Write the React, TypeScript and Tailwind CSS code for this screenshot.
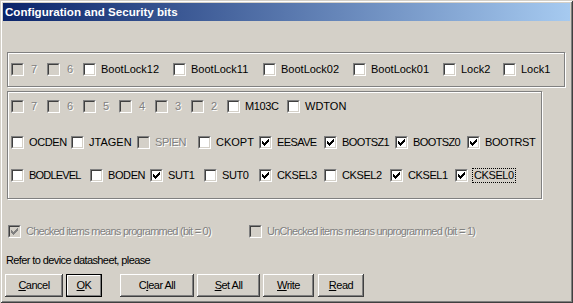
import React from "react";

const CHECK = [
  "......X",
  ".....XX",
  "X...XXX",
  "XX.XXX.",
  "XXXXX..",
  ".XXX...",
  "..X....",
];

function CheckMark({ color }: { color: string }) {
  const rects: React.ReactNode[] = [];
  CHECK.forEach((row, y) =>
    row.split("").forEach((c, x) => {
      if (c === "X") rects.push(<rect key={`${x}-${y}`} x={x} y={y} width={1} height={1} />);
    })
  );
  return (
    <svg width="7" height="7" viewBox="0 0 7 7" fill={color} shapeRendering="crispEdges">
      {rects}
    </svg>
  );
}

function Box({ checked, disabled }: { checked?: boolean; disabled?: boolean }) {
  return (
    <div className="w-[13px] h-[13px] shrink-0 border border-t-[#808080] border-l-[#808080] border-b-white border-r-white">
      <div
        className={
          "w-full h-full border border-t-[#404040] border-l-[#404040] border-b-[#d4d0c8] border-r-[#d4d0c8] flex items-center justify-center " +
          (disabled ? "bg-[#d4d0c8]" : "bg-white")
        }
      >
        {checked && <CheckMark color={disabled ? "#808080" : "#000000"} />}
      </div>
    </div>
  );
}

type ItemProps = {
  w?: string;
  label: string;
  checked?: boolean;
  disabled?: boolean;
  digit?: boolean;
  track?: string;
  focus?: boolean;
};

function Item({ w = "", label, checked, disabled, digit, track = "", focus }: ItemProps) {
  const color = disabled ? "text-[#808080] [text-shadow:1px_1px_0_#ffffff]" : "text-black";
  return (
    <div className={"flex items-center h-[13px] shrink-0 " + w}>
      <Box checked={checked} disabled={disabled} />
      {focus ? (
        <span className={"ml-[4px] h-[15px] leading-[13px] px-[1px] border border-dotted border-black whitespace-nowrap " + color + " " + track}>
          {label}
        </span>
      ) : (
        <span className={(digit ? "ml-[7px] " : "ml-[5px] ") + "leading-[13px] whitespace-nowrap " + color + " " + track}>
          {label}
        </span>
      )}
    </div>
  );
}

function Btn({ w, def, children }: { w: string; def?: boolean; children: React.ReactNode }) {
  const cls = def
    ? "border border-black shadow-[inset_-1px_-1px_0_#808080,inset_1px_1px_0_#ffffff]"
    : "shadow-[inset_-1px_-1px_0_#404040,inset_1px_1px_0_#ffffff,inset_-2px_-2px_0_#808080,inset_2px_2px_0_#d4d0c8]";
  return (
    <div className={"h-[23px] flex items-center justify-center shrink-0 tracking-[-0.5px] " + w + " " + cls}>
      <span className="whitespace-nowrap">{children}</span>
    </div>
  );
}

const CAPS = "tracking-[-0.4px]";

export default function App() {
  return (
    <div className="w-[573px] h-[303px] bg-[#d4d0c8] p-[3px] flex flex-col font-['Liberation_Sans',Arial,sans-serif] text-[11px] text-black shadow-[inset_1px_1px_0_#d4d0c8,inset_-1px_-1px_0_#404040,inset_2px_2px_0_#ffffff,inset_-2px_-2px_0_#808080]">
      <div className="h-[18px] shrink-0 bg-[linear-gradient(to_right,#0a246a,#a6caf0)] flex items-center pl-[2px] text-white font-bold text-[11.6px] whitespace-nowrap">
        Configuration and Security bits
      </div>

      <div className="ml-[4px] mt-[31px] w-[558px] h-[35px] shrink-0 border border-[#808080] shadow-[inset_1px_1px_0_#ffffff,1px_1px_0_#ffffff] pl-[3px] pt-[10px] flex">
        <Item w="w-[36px]" label="7" disabled digit />
        <Item w="w-[36px]" label="6" disabled digit />
        <Item w="w-[90px]" label="BootLock12" />
        <Item w="w-[90px]" label="BootLock11" />
        <Item w="w-[90px]" label="BootLock02" />
        <Item w="w-[90px]" label="BootLock01" />
        <Item w="w-[60px]" label="Lock2" />
        <Item label="Lock1" />
      </div>

      <div className="ml-[4px] mt-[4px] w-[535px] h-[108px] shrink-0 border border-[#808080] shadow-[inset_1px_1px_0_#ffffff,1px_1px_0_#ffffff] pl-[3px] pt-[8px] flex flex-col">
        <div className="flex">
          <Item w="w-[36px]" label="7" disabled digit />
          <Item w="w-[36px]" label="6" disabled digit />
          <Item w="w-[36px]" label="5" disabled digit />
          <Item w="w-[36px]" label="4" disabled digit />
          <Item w="w-[36px]" label="3" disabled digit />
          <Item w="w-[36px]" label="2" disabled digit />
          <Item w="w-[60px]" label="M103C" track={CAPS} />
          <Item label="WDTON" />
        </div>
        <div className="flex mt-[23px]">
          <Item w="w-[60px]" label="OCDEN" track={CAPS} />
          <Item w="w-[66px]" label="JTAGEN" />
          <Item w="w-[61px]" label="SPIEN" disabled track={CAPS} />
          <Item w="w-[61px]" label="CKOPT" />
          <Item w="w-[65px]" label="EESAVE" checked track="tracking-[-0.6px]" />
          <Item w="w-[71px]" label="BOOTSZ1" checked track="tracking-[-0.6px]" />
          <Item w="w-[72px]" label="BOOTSZ0" checked track="tracking-[-0.6px]" />
          <Item label="BOOTRST" checked track={CAPS} />
        </div>
        <div className="flex mt-[20px]">
          <Item w="w-[79px]" label="BODLEVEL" track="tracking-[-0.8px]" />
          <Item w="w-[60px]" label="BODEN" track={CAPS} />
          <Item w="w-[54px]" label="SUT1" checked track={CAPS} />
          <Item w="w-[55px]" label="SUT0" track={CAPS} />
          <Item w="w-[65px]" label="CKSEL3" checked track={CAPS} />
          <Item w="w-[66px]" label="CKSEL2" track={CAPS} />
          <Item w="w-[65px]" label="CKSEL1" checked track={CAPS} />
          <Item label="CKSEL0" checked focus track={CAPS} />
        </div>
      </div>

      <div className="mt-[26px] ml-[5px] flex h-[13px] shrink-0">
        <Item w="w-[241px]" label="Checked items means programmed (bit = 0)" checked disabled track="tracking-[-0.75px]" />
        <Item label="UnChecked items means unprogrammed (bit = 1)" disabled track="tracking-[-0.75px]" />
      </div>

      <div className="mt-[16px] ml-[3px] h-[13px] leading-[13px] shrink-0 whitespace-nowrap tracking-[-0.6px]">
        Refer to device datasheet, please
      </div>

      <div className="mt-[7px] ml-[2px] flex shrink-0">
        <Btn w="w-[58px]">
          <u>C</u>ancel
        </Btn>
        <div className="ml-[3px]">
          <Btn w="w-[36px]" def>
            <u>O</u>K
          </Btn>
        </div>
        <div className="ml-[18px]">
          <Btn w="w-[74px]">
            C<u>l</u>ear All
          </Btn>
        </div>
        <div className="ml-[3px]">
          <Btn w="w-[63px]">
            <u>S</u>et All
          </Btn>
        </div>
        <div className="ml-[3px]">
          <Btn w="w-[51px]">
            <u>W</u>rite
          </Btn>
        </div>
        <div className="ml-[4px]">
          <Btn w="w-[46px]">
            <u>R</u>ead
          </Btn>
        </div>
      </div>
    </div>
  );
}
